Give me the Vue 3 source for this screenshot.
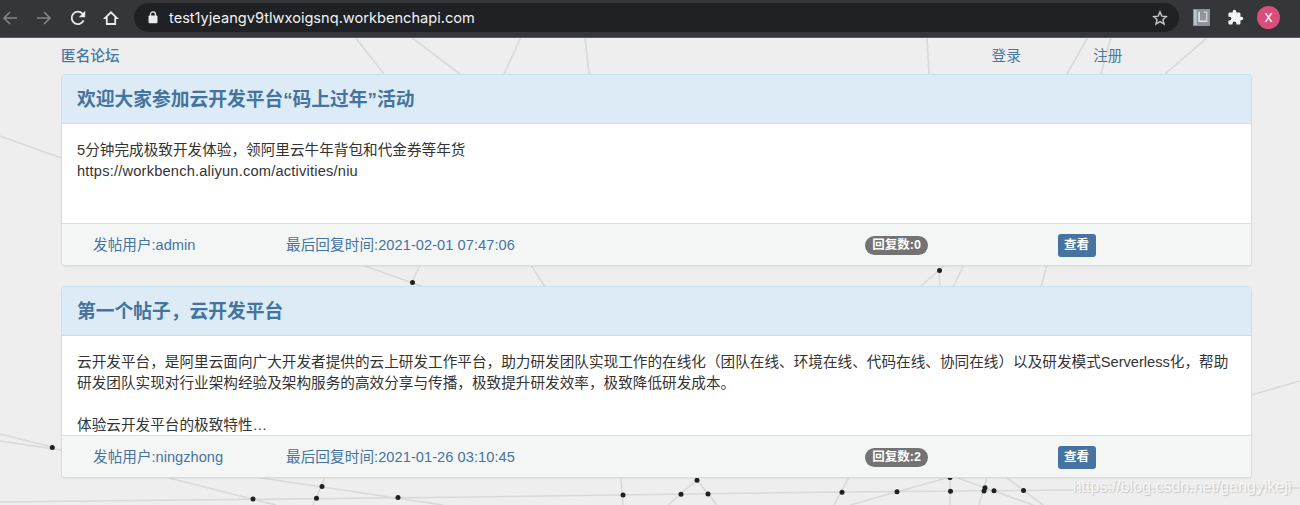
<script setup>
import { ref } from 'vue'

const url = 'test1yjeangv9tlwxoigsnq.workbenchapi.com'

const posts = ref([
  {
    id: 1,
    title: '欢迎大家参加云开发平台“码上过年”活动',
    content: '5分钟完成极致开发体验，领阿里云牛年背包和代金券等年货\n',
    link: 'https://workbench.aliyun.com/activities/niu',
    user: 'admin',
    time: '2021-02-01 07:47:06',
    replies: 0
  },
  {
    id: 2,
    title: '第一个帖子，云开发平台',
    content: '云开发平台，是阿里云面向广大开发者提供的云上研发工作平台，助力研发团队实现工作的在线化（团队在线、环境在线、代码在线、协同在线）以及研发模式Serverless化，帮助\n研发团队实现对行业架构经验及架构服务的高效分享与传播，极致提升研发效率，极致降低研发成本。\n\n体验云开发平台的极致特性…',
    user: 'ningzhong',
    time: '2021-01-26 03:10:45',
    replies: 2
  }
])

// background network: [x1, y1, x2, y2]
const lines = [
  [355, 37, 384, 74], [411, 37, 460, 74], [521, 37, 504, 74], [585, 37, 589, 74],
  [927, 37, 929, 74], [1088, 37, 1067, 74], [1111, 37, 1101, 74], [1208, 37, 1165, 74],
  [0, 136, 61, 158], [362, 265, 424, 287], [420, 265, 412, 282], [531, 265, 545, 287],
  [920, 287, 945, 265], [939, 270, 940, 287], [964, 265, 953, 287], [1047, 265, 1041, 287],
  [1251, 395, 1300, 381],
  [0, 434, 52, 447], [0, 441, 61, 450], [0, 502, 430, 497.5], [430, 497.5, 842, 492],
  [842, 492, 1300, 488], [165, 477, 276, 505], [255, 477, 443, 505], [325, 477, 313, 505],
  [621, 477, 623, 505], [697, 480, 668, 505], [697, 480, 717, 505], [849, 477, 834, 505],
  [850, 505, 950, 477], [950, 477, 950, 505], [955, 477, 1033, 505], [987, 477, 979, 505],
  [1006, 477, 1043, 505]
]
const dots = [
  [412.5, 282.5], [939.5, 270.5], [52.3, 447.5], [253, 499], [322, 486.5], [316.5, 498.3], [398, 497.5],
  [623, 495], [681, 494.2], [697, 480.2], [708, 494], [842, 492.2], [897, 491.8], [950, 477.5],
  [950.5, 491.3], [985, 487.8], [984, 491], [994, 490.8], [1023.5, 490.6]
]
</script>

<template>
  <div class="window">
    <header class="toolbar">
      <svg class="arrow" viewBox="0 0 16 16"><path d="M15 8H2M8 2 2 8l6 6" /></svg>
      <svg class="arrow forward" viewBox="0 0 16 16"><path d="M1 8h13M8 2l6 6-6 6" /></svg>
      <svg class="reload" viewBox="0 0 16 16">
        <path d="M13.6 10.4A6.2 6.2 0 1 1 12.4 3.6L14.2 5.6" />
        <path class="fill" d="M15.2 .8v6.4H8.8z" />
      </svg>
      <svg class="home" viewBox="0 0 16 16"><path d="M2 8.2 8 2.3 14 8.2H12.2v5.8H3.8V8.2z" /></svg>
      <div class="address">
        <svg class="lock" viewBox="0 0 10 13">
          <rect x=".5" y="4.6" width="9" height="7.6" rx="1" />
          <path d="M2.5 5V3.4a2.5 2.5 0 0 1 5 0V5" />
        </svg>
        <span class="url">{{ url }}</span>
        <svg class="star" viewBox="0 0 16 16">
          <path d="M8 1.9l1.8 4.2 4.6.4-3.5 3 1.1 4.5L8 11.6 4 14l1.1-4.5-3.5-3 4.6-.4z" />
        </svg>
      </div>
      <svg class="ext" viewBox="0 0 18 18">
        <rect width="18" height="18" fill="#8f9499" />
        <path d="M1 1h3v16H1z" fill="#b9c4cc" />
        <path d="M6.5 3v10h8V3.5h-3" fill="none" stroke="#c9ced2" stroke-width="1.6" />
        <path d="M6.5 3v10h8" fill="none" stroke="#e9ecee" stroke-width="1.2" />
      </svg>
      <svg class="puzzle" viewBox="0 0 24 24">
        <path d="M20.5 11H19V7c0-1.1-.9-2-2-2h-4V3.5a2.5 2.5 0 0 0-5 0V5H4c-1.1 0-2 .9-2 2v3.8h1.5a2.7 2.7 0 0 1 0 5.4H2V20c0 1.1.9 2 2 2h3.8v-1.5a2.7 2.7 0 0 1 5.4 0V22H17c1.1 0 2-.9 2-2v-4h1.5a2.5 2.5 0 0 0 0-5z" />
      </svg>
      <span class="avatar">X</span>
    </header>

    <main class="page">
      <svg class="network" viewBox="0 38 1300 467">
        <line v-for="(l, i) in lines" :key="'l' + i" :x1="l[0]" :y1="l[1]" :x2="l[2]" :y2="l[3]" />
        <circle v-for="(d, i) in dots" :key="'d' + i" :cx="d[0]" :cy="d[1]" r="2.5" />
      </svg>

      <div class="container">
        <nav class="nav">
          <a class="brand">匿名论坛</a>
          <a>登录</a>
          <a>注册</a>
        </nav>

        <section v-for="post in posts" :key="post.id" class="panel">
          <h3 class="panel-heading">{{ post.title }}</h3>
          <div class="panel-body">{{ post.content }}<span v-if="post.link" class="link">{{ post.link }}</span></div>
          <div class="panel-footer">
            <span class="user">发帖用户:{{ post.user }}</span>
            <span class="time">最后回复时间:{{ post.time }}</span>
            <span class="replies"><span class="badge">回复数:{{ post.replies }}</span></span>
            <span class="view"><button class="btn">查看</button></span>
          </div>
        </section>
      </div>

      <div class="watermark">https://blog.csdn.net/gangyikeji</div>
    </main>
  </div>
</template>

<style>
body { margin: 0; overflow: hidden; }
</style>

<style scoped>
.window { width: 1300px; height: 505px; display: flex; flex-direction: column; overflow: hidden; font-family: "Liberation Sans", "Noto Sans CJK SC", sans-serif; font-size: 14.63px; line-height: 21px; color: #333; }

.toolbar { flex: none; display: flex; align-items: center; height: 38px; padding-bottom: 2px; box-sizing: border-box; background: #35363a; border-bottom: 1px solid #5c5d60; }
.toolbar svg { flex: none; fill: none; stroke: #e8eaed; stroke-width: 1.8; }
.arrow { width: 16px; height: 16px; margin-left: 2px; }
.toolbar .arrow { stroke: #85878a; stroke-width: 1.5; }
.arrow.forward { margin-left: 18px; }
.reload { width: 16px; height: 16px; margin-left: 18px; }
.toolbar .fill { fill: #e8eaed; stroke: none; }
.home { width: 16px; height: 16px; margin-left: 17px; }
.address { display: flex; align-items: center; width: 1045px; height: 29px; margin-left: 15px; padding: 0 11px 0 14px; box-sizing: border-box; border-radius: 15px; background: #202124; }
.lock { width: 10px; height: 13px; }
.toolbar .lock { stroke-width: 1.3; }
.lock rect { fill: #e8eaed; stroke: none; }
.url { flex: 1; margin-left: 11px; padding-top: 2px; font-family: Inter, sans-serif; font-size: 14.6px; color: #f1f3f4; white-space: nowrap; }
.star { width: 16px; height: 16px; }
.toolbar .star { stroke: #c4c7ca; stroke-width: 1.4; }
.ext { width: 17px; height: 17px; margin-left: 14px; }
.toolbar .ext { stroke: none; }
.puzzle { width: 17px; height: 17px; margin-left: 17px; }
.toolbar .puzzle { fill: #f1f3f4; stroke: none; }
.avatar { width: 23px; height: 23px; margin-left: 13px; border-radius: 50%; background: #d94f7b; color: #fff; font-family: Roboto, sans-serif; font-size: 13px; line-height: 23px; text-align: center; }

.page { position: relative; flex: 1; background: #eee; }
.network { position: absolute; left: 0; top: 0; width: 1300px; height: 467px; overflow: hidden; }
.network line { stroke: #d8d9d9; stroke-width: 1.6; }
.network circle { fill: #1d2226; }

.container { position: relative; width: 1191px; margin-left: 61px; }
.nav { display: grid; grid-template-columns: 930.5px 101.7px 1fr; height: 36px; align-items: center; color: #4878a3; }
.brand { padding-top: 1px; font-weight: 500; }

.panel { height: 192px; margin-bottom: 20px; box-sizing: border-box; display: flex; flex-direction: column; border: 1px solid #c5e3ee; border-radius: 4px; overflow: hidden; background: #fff; box-shadow: 0 1px 1px rgba(0, 0, 0, 0.05); }
.panel-heading { flex: none; height: 49px; margin: 0; padding: 0 15px; box-sizing: border-box; border-bottom: 1px solid #c5e3ee; background: #dcebf6; color: #44749e; font-size: 18.75px; font-weight: 700; line-height: 49px; }
.panel-body { flex: none; height: 99px; padding: 15.5px 15px 0; box-sizing: border-box; white-space: pre; overflow: hidden; }
.link { letter-spacing: 0.2px; }
.panel-footer { flex: 1; display: grid; grid-template-columns: 193px 579px 192.5px 1fr; align-items: center; padding: 1px 0 0 31px; border-top: 1px solid #ddd; background: #f4f6f6; color: #44749f; }
.time { letter-spacing: 0.05px; }
.badge { display: inline-block; height: 19px; padding: 0 7.3px; border-radius: 10px; background: #737373; color: #fff; font-size: 12.5px; font-weight: 700; line-height: 19px; vertical-align: middle; }
.btn { display: block; height: 23px; width: 38px; padding: 0; border: none; border-radius: 3px; background: #44749f; color: #fff; font-family: inherit; font-size: 12.5px; font-weight: 700; line-height: 23px; }

.watermark { position: absolute; right: 8.5px; bottom: 8px; color: #f6f6f6; font-size: 16px; line-height: 20px; text-shadow: 1px 1px 1px #c4c4c4; }
</style>
